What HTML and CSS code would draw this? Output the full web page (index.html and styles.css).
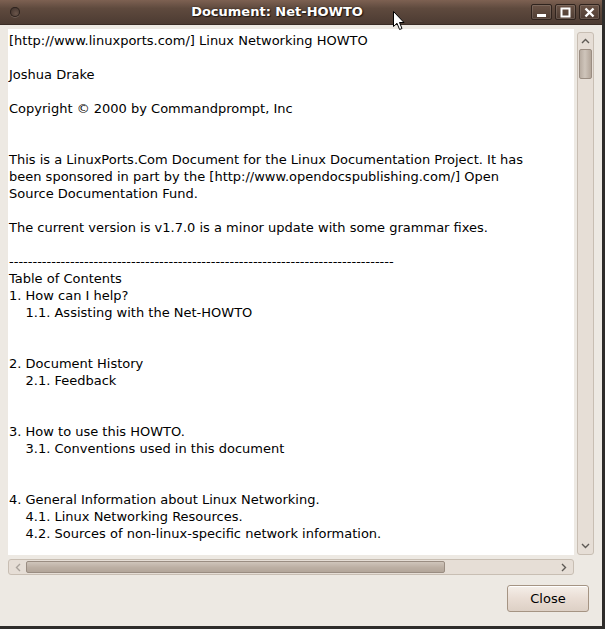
FILE: index.html
```html
<!DOCTYPE html>
<html>
<head>
<meta charset="utf-8">
<link rel="stylesheet" href="styles.css">
</head>
<body>
<div class="window">
  <div class="titlebar">
    <span class="menu-dot"></span>
    <span class="title">Document: Net-HOWTO</span>
    <div class="wm-buttons">
      <span class="wm-btn"><svg width="11" height="11" viewBox="0 0 11 11"><rect x="1" y="7" width="9" height="3" fill="#fff"/></svg></span>
      <span class="wm-btn"><svg width="11" height="11" viewBox="0 0 11 11"><rect x="1.5" y="1.5" width="8" height="8" fill="none" stroke="#fff" stroke-width="2"/></svg></span>
      <span class="wm-btn"><svg width="11" height="11" viewBox="0 0 11 11"><path d="M1.5 1.5 L9.5 9.5 M9.5 1.5 L1.5 9.5" stroke="#fff" stroke-width="2.4"/></svg></span>
    </div>
    <svg class="cursor" width="13" height="20" viewBox="0 0 13 20"><path d="M0.5 0.5 L0.5 15.5 L4 12.3 L6.6 18.5 L9 17.5 L6.5 11.5 L11 11.5 Z" fill="#fff" stroke="#000" stroke-width="1" stroke-linejoin="round"/></svg>
  </div>
  <div class="content">
    <div class="scroll-area">
      <div class="textview"><pre class="doc">[http://www.linuxports.com/] Linux Networking HOWTO

Joshua Drake

Copyright © 2000 by Commandprompt, Inc


This is a LinuxPorts.Com Document for the Linux Documentation Project. It has
been sponsored in part by the [http://www.opendocspublishing.com/] Open
Source Documentation Fund.

The current version is v1.7.0 is a minor update with some grammar fixes.

----------------------------------------------------------------------------------
Table of Contents
1. How can I help?
    1.1. Assisting with the Net-HOWTO


2. Document History
    2.1. Feedback


3. How to use this HOWTO.
    3.1. Conventions used in this document


4. General Information about Linux Networking.
    4.1. Linux Networking Resources.
    4.2. Sources of non-linux-specific network information.</pre></div>
      <div class="vscroll">
        <span class="arrow"><svg width="9" height="6" viewBox="0 0 9 6"><path d="M1 5 L4.5 1.5 L8 5" fill="none" stroke="#5e5a55" stroke-width="1.4"/></svg></span>
        <span class="vthumb"></span>
        <span class="vspace"></span>
        <span class="arrow"><svg width="9" height="6" viewBox="0 0 9 6"><path d="M1 1 L4.5 4.5 L8 1" fill="none" stroke="#5e5a55" stroke-width="1.4"/></svg></span>
      </div>
      <div class="hscroll">
        <span class="harrow"><svg width="6" height="9" viewBox="0 0 6 9"><path d="M5 1 L1.5 4.5 L5 8" fill="none" stroke="#a9a29b" stroke-width="1.4"/></svg></span>
        <span class="hthumb"></span>
        <span class="hspace"></span>
        <span class="harrow"><svg width="6" height="9" viewBox="0 0 6 9"><path d="M1 1 L4.5 4.5 L1 8" fill="none" stroke="#5e5a55" stroke-width="1.4"/></svg></span>
      </div>
    </div>
    <div class="actions">
      <button class="btn">Close</button>
    </div>
  </div>
</div>
</body>
</html>
```
FILE: styles.css
```css
html, body {
  margin: 0;
  padding: 0;
  background: #2e2c2a;
  width: 605px;
  height: 629px;
  overflow: hidden;
}
.window {
  width: 602px;
  height: 626px;
  background: #ede9e3;
  display: flex;
  flex-direction: column;
  font-family: "DejaVu Sans", sans-serif;
}
.titlebar {
  position: relative;
  height: 25px;
  flex: none;
  background: linear-gradient(#7d6152 0%, #5f4a3e 35%, #4c3b32 100%);
  border-bottom: 1px solid #3a2c25;
  box-sizing: border-box;
  display: flex;
  align-items: center;
}
.menu-dot {
  position: absolute;
  left: 10px;
  top: 7px;
  width: 10px;
  height: 10px;
  border-radius: 50%;
  background: radial-gradient(circle at 60% 65%, #6a554a 0%, #463730 70%);
  box-shadow: inset 0 0 0 1px #2f241f, 0 1px 0 rgba(255,255,255,0.15);
}
.title {
  flex: 1;
  text-align: center;
  color: #fff;
  font-weight: bold;
  font-size: 13px;
  text-shadow: 1px 1px 1px #1e1510, 0 0 2px #2a1f18;
  padding-right: 48px;
  margin-top: -1px;
}
.wm-buttons {
  position: absolute;
  right: 2px;
  top: 4px;
  display: flex;
  gap: 3px;
}
.wm-btn {
  width: 21px;
  height: 16px;
  box-sizing: border-box;
  border: 1px solid #2f231d;
  border-radius: 2px;
  background: linear-gradient(#6a5346, #4f3d33);
  box-shadow: inset 0 0 0 1px rgba(255,255,255,0.12);
  display: flex;
  align-items: center;
  justify-content: center;
}
.cursor {
  position: absolute;
  left: 393px;
  top: 11px;
}
.content {
  flex: 1;
  display: flex;
  flex-direction: column;
  padding: 4px 7px 0 8px;
}
.scroll-area {
  display: grid;
  grid-template-columns: 566px 17px;
  grid-template-rows: 526px 16px;
  column-gap: 3px;
  row-gap: 4px;
}
.textview {
  background: #fff;
  overflow: hidden;
}
.doc {
  margin: 0;
  padding: 3px 0 0 1px;
  font-family: "DejaVu Sans", sans-serif;
  font-size: 13px;
  line-height: 17px;
  color: #000;
  white-space: pre;
}
.vscroll {
  margin-top: 3px;
  background: #e6ded6;
  border: 1px solid #c8beb3;
  border-radius: 3px;
  box-sizing: border-box;
  display: flex;
  flex-direction: column;
  align-items: center;
}
.vscroll .arrow {
  height: 16px;
  display: flex;
  align-items: center;
  justify-content: center;
}
.vthumb {
  width: 13px;
  height: 30px;
  box-sizing: border-box;
  border: 1px solid #9a8d82;
  border-radius: 2px;
  background: linear-gradient(90deg, #b8aca1, #cfc5bb 45%, #b3a69a);
}
.vspace { flex: 1; }
.hscroll {
  background: #e6ded6;
  border: 1px solid #c8beb3;
  border-radius: 3px;
  box-sizing: border-box;
  display: flex;
  align-items: center;
  padding: 0 1px;
}
.harrow {
  width: 16px;
  display: flex;
  justify-content: center;
}
.hthumb {
  width: 419px;
  height: 12px;
  box-sizing: border-box;
  border: 1px solid #9a8d82;
  border-radius: 2px;
  background: linear-gradient(#cfc5bb, #bcafa3 55%, #b3a69a);
}
.hspace { flex: 1; }
.actions {
  display: flex;
  justify-content: flex-end;
  padding: 10px 6px 0 0;
}
.btn {
  width: 82px;
  height: 27px;
  font-family: "DejaVu Sans", sans-serif;
  font-size: 13px;
  color: #000;
  border: 1px solid #a59483;
  border-radius: 3px;
  background: linear-gradient(#f5efe9, #e9ddd4 50%, #ddd0c5);
  box-shadow: inset 0 1px 0 #fff;
  padding: 0;
}
```
